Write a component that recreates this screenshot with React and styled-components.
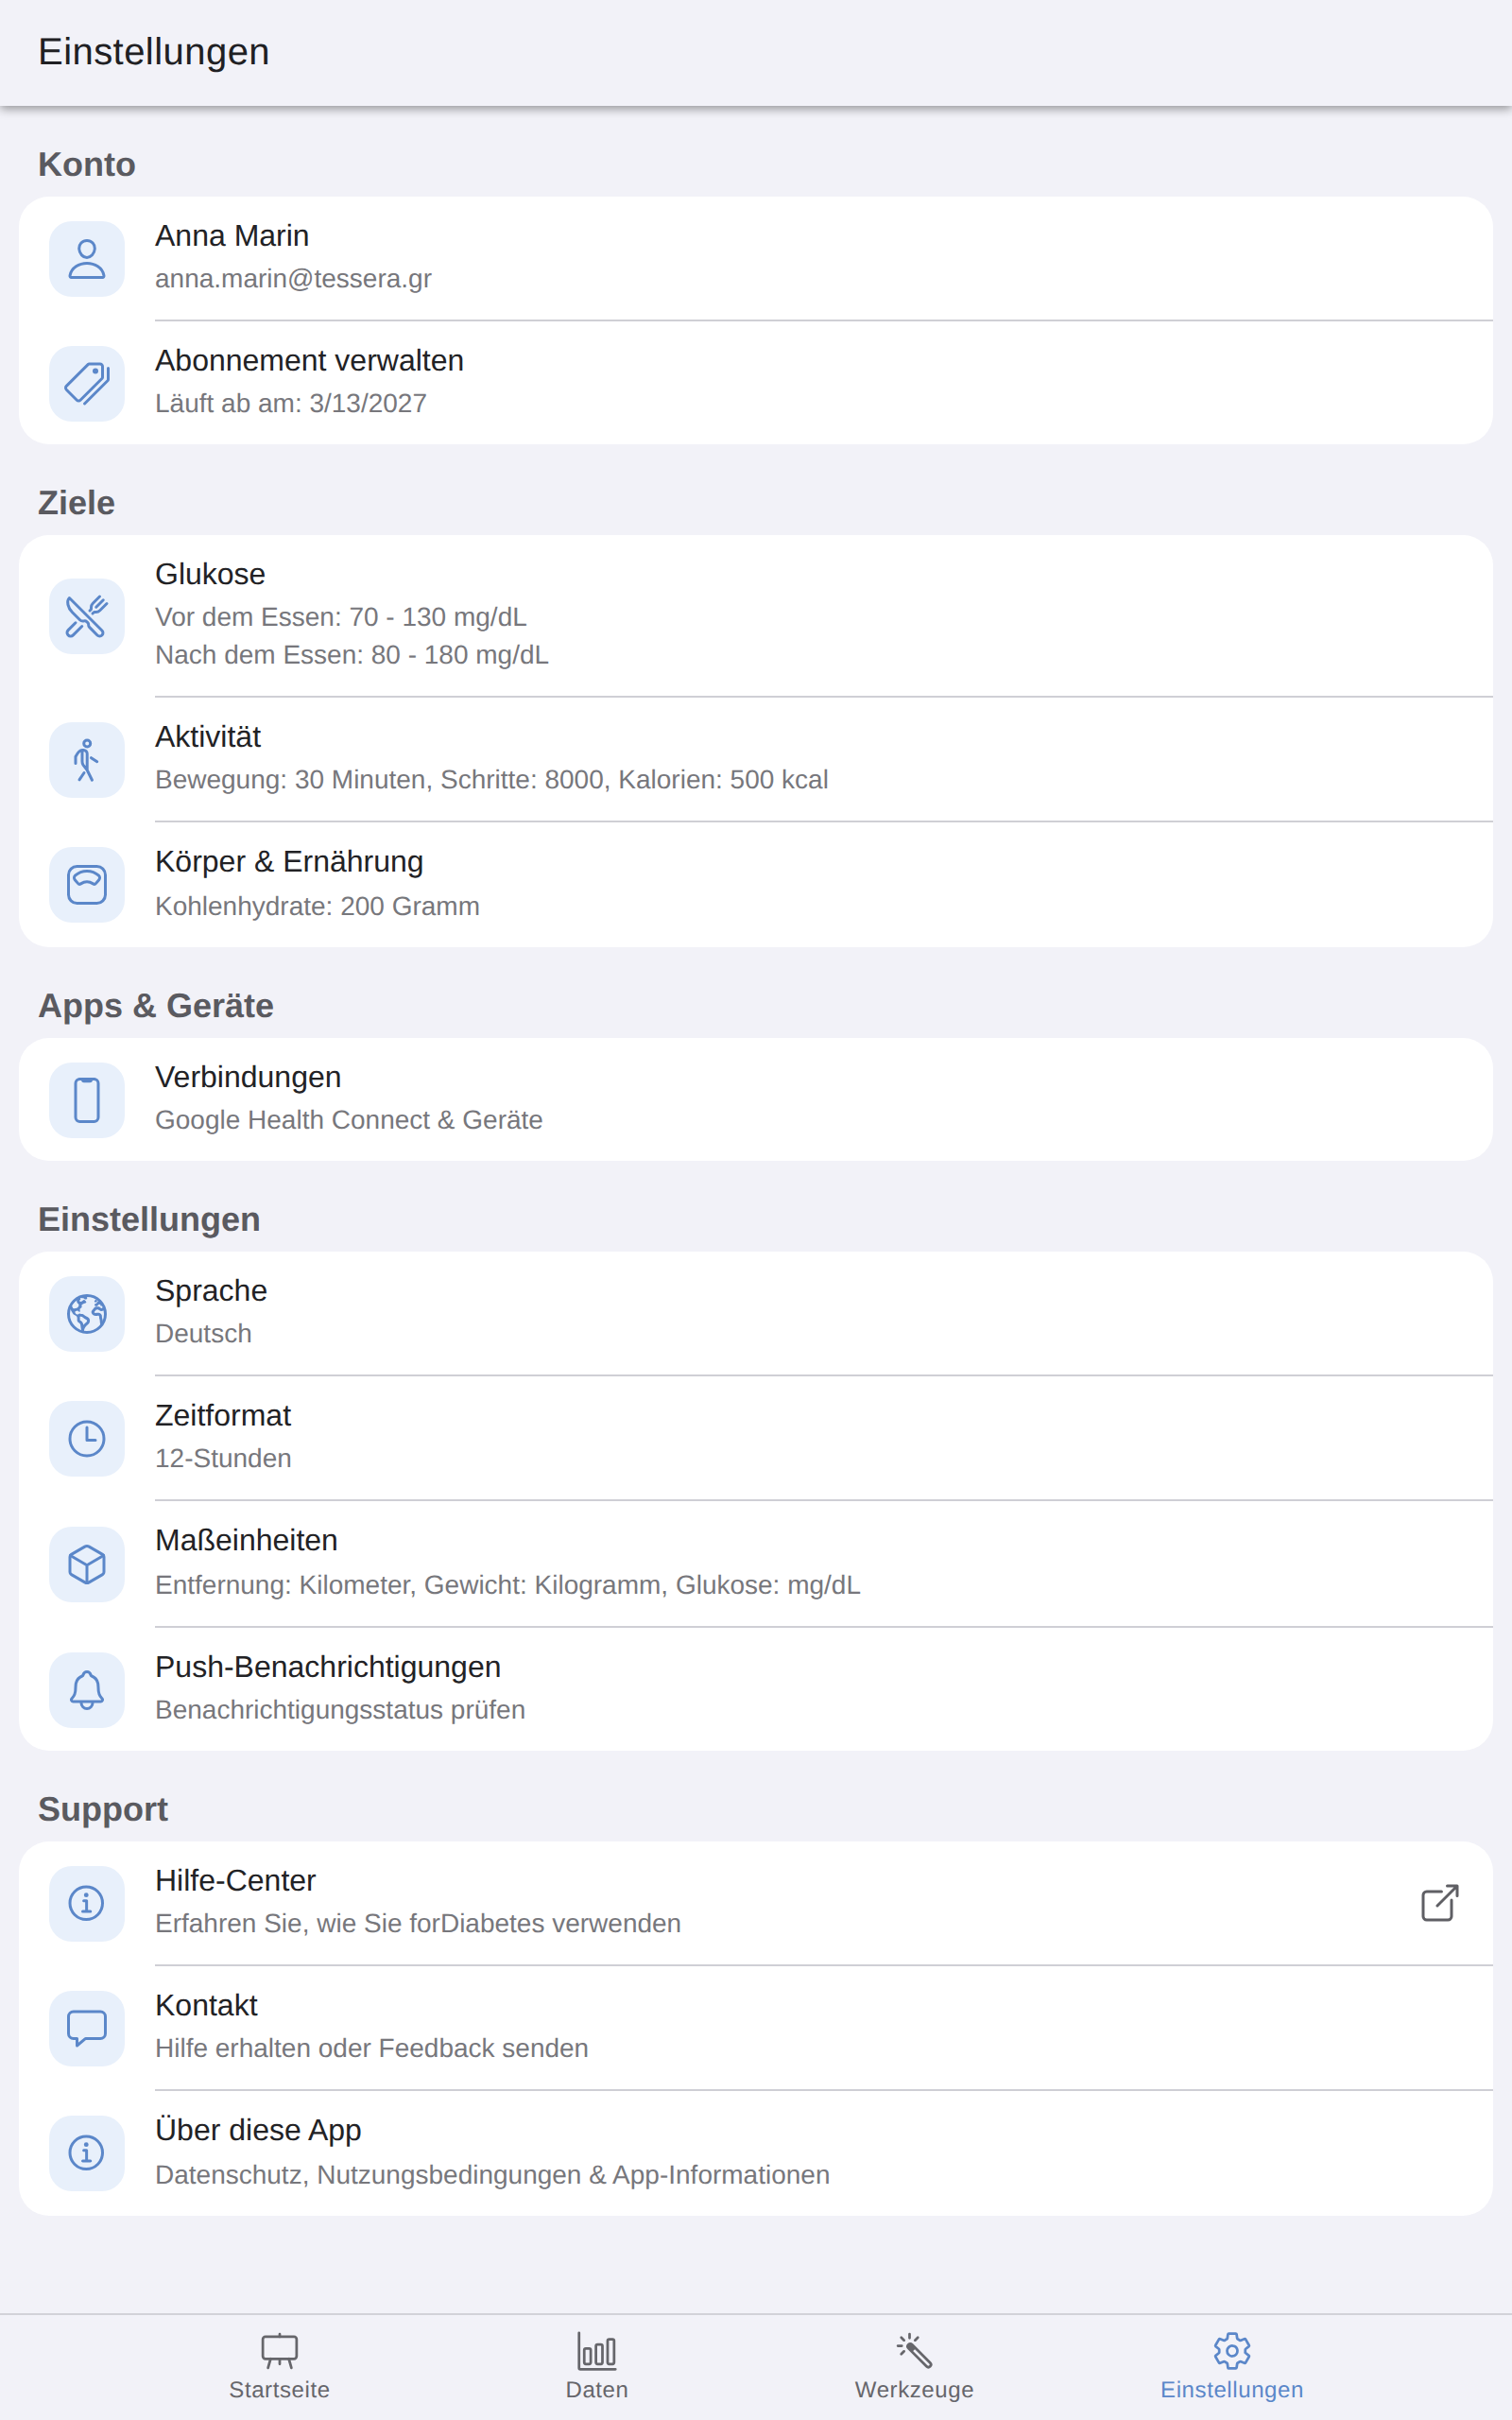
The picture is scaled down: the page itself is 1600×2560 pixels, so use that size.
import React from 'react'
import styled, { createGlobalStyle } from 'styled-components'
import {
  IoPersonOutline,
  IoPricetagsOutline,
  IoRestaurantOutline,
  IoWalkOutline,
  IoScaleOutline,
  IoPhonePortraitOutline,
  IoEarthOutline,
  IoTimeOutline,
  IoCubeOutline,
  IoNotificationsOutline,
  IoInformationCircleOutline,
  IoChatboxOutline,
  IoOpenOutline,
  IoEaselOutline,
  IoBarChartOutline,
  IoColorWandOutline,
  IoSettingsOutline,
} from 'react-icons/io5'

const sections = [
  {
    title: 'Konto',
    items: [
      { icon: IoPersonOutline, title: 'Anna Marin', lines: ['anna.marin@tessera.gr'] },
      { icon: IoPricetagsOutline, title: 'Abonnement verwalten', lines: ['Läuft ab am: 3/13/2027'] },
    ],
  },
  {
    title: 'Ziele',
    items: [
      {
        icon: IoRestaurantOutline,
        title: 'Glukose',
        lines: ['Vor dem Essen: 70 - 130 mg/dL', 'Nach dem Essen: 80 - 180 mg/dL'],
      },
      {
        icon: IoWalkOutline,
        title: 'Aktivität',
        lines: ['Bewegung: 30 Minuten, Schritte: 8000, Kalorien: 500 kcal'],
      },
      { icon: IoScaleOutline, title: 'Körper & Ernährung', tall: true, lines: ['Kohlenhydrate: 200 Gramm'] },
    ],
  },
  {
    title: 'Apps & Geräte',
    items: [
      { icon: IoPhonePortraitOutline, title: 'Verbindungen', lines: ['Google Health Connect & Geräte'] },
    ],
  },
  {
    title: 'Einstellungen',
    items: [
      { icon: IoEarthOutline, title: 'Sprache', lines: ['Deutsch'] },
      { icon: IoTimeOutline, title: 'Zeitformat', lines: ['12-Stunden'] },
      {
        icon: IoCubeOutline,
        title: 'Maßeinheiten',
        tall: true,
        lines: ['Entfernung: Kilometer, Gewicht: Kilogramm, Glukose: mg/dL'],
      },
      { icon: IoNotificationsOutline, title: 'Push-Benachrichtigungen', lines: ['Benachrichtigungsstatus prüfen'] },
    ],
  },
  {
    title: 'Support',
    items: [
      {
        icon: IoInformationCircleOutline,
        title: 'Hilfe-Center',
        external: true,
        lines: ['Erfahren Sie, wie Sie forDiabetes verwenden'],
      },
      { icon: IoChatboxOutline, title: 'Kontakt', lines: ['Hilfe erhalten oder Feedback senden'] },
      {
        icon: IoInformationCircleOutline,
        title: 'Über diese App',
        tall: true,
        lines: ['Datenschutz, Nutzungsbedingungen & App-Informationen'],
      },
    ],
  },
]

const tabs = [
  { icon: IoEaselOutline, label: 'Startseite' },
  { icon: IoBarChartOutline, label: 'Daten' },
  { icon: IoColorWandOutline, label: 'Werkzeuge' },
  { icon: IoSettingsOutline, label: 'Einstellungen', active: true },
]

export default function App() {
  return (
    <Page>
      <GlobalStyle />
      <Header>
        <HeaderTitle>Einstellungen</HeaderTitle>
      </Header>
      <Main>
        {sections.map(section => (
          <section key={section.title}>
            <SectionTitle>{section.title}</SectionTitle>
            <Card>
              {section.items.map((item, i) => {
                const last = i === section.items.length - 1
                return (
                  <Row key={item.title}>
                    <IconSlot $nudge={last && !item.tall}>
                      <IconBox>
                        <item.icon size={48} />
                      </IconBox>
                    </IconSlot>
                    <Body $last={last}>
                      <Texts>
                        <Title $tall={item.tall}>{item.title}</Title>
                        {item.lines.map(line => (
                          <Sub key={line}>{line}</Sub>
                        ))}
                      </Texts>
                      {item.external && (
                        <External>
                          <IoOpenOutline size={48} />
                        </External>
                      )}
                    </Body>
                  </Row>
                )
              })}
            </Card>
          </section>
        ))}
      </Main>
      <TabBar>
        {tabs.map(tab => (
          <Tab key={tab.label} $active={tab.active}>
            <tab.icon size={44} />
            <TabLabel>{tab.label}</TabLabel>
          </Tab>
        ))}
      </TabBar>
    </Page>
  )
}

const GlobalStyle = createGlobalStyle`
  html, body {
    margin: 0;
    padding: 0;
    background: #f2f2f8;
    text-rendering: geometricPrecision;
  }
  * {
    box-sizing: border-box;
  }
`

const Page = styled.div`
  display: flex;
  flex-direction: column;
  height: 2560px;
  overflow: hidden;
  background: #f2f2f8;
  font-family: 'Liberation Sans', Arial, sans-serif;
`

const Header = styled.header`
  position: relative;
  flex: none;
  height: 112px;
  padding: 0 40px 2px;
  display: flex;
  align-items: center;
  background: #f2f2f8;
  box-shadow: 0 3px 10px rgba(0, 0, 0, 0.4);
`

const HeaderTitle = styled.h1`
  margin: 0;
  font-size: 40px;
  font-weight: 400;
  letter-spacing: 0.45px;
  color: #202023;
`

const Main = styled.main`
  flex: 1;
  padding: 0 20px;
`

const SectionTitle = styled.h2`
  margin: 0;
  height: 96px;
  padding: 41px 20px 0;
  font-size: 36px;
  line-height: 42px;
  font-weight: 700;
  color: #5a5a60;
`

const Card = styled.div`
  background: #fff;
  border-radius: 32px;
  overflow: hidden;
`

const Row = styled.div`
  display: flex;
`

const IconSlot = styled.div`
  flex: none;
  width: 144px;
  padding-left: 32px;
  padding-top: ${props => (props.$nudge ? '2px' : '0')};
  display: flex;
  align-items: center;
`

const IconBox = styled.div`
  width: 80px;
  height: 80px;
  border-radius: 24px;
  background: #e8f0fb;
  color: #5b87c9;
  display: flex;
  align-items: center;
  justify-content: center;
`

const Body = styled.div`
  flex: 1;
  min-width: 0;
  display: flex;
  align-items: center;
  padding-right: 32px;
  border-bottom: ${props => (props.$last ? 'none' : '2px solid #cfcfd5')};
`

const Texts = styled.div`
  flex: 1;
  min-width: 0;
  padding: 21px 0 23px;
`

const Title = styled.div`
  font-size: 32px;
  line-height: ${props => (props.$tall ? '41px' : '40px')};
  margin-bottom: ${props => (props.$tall ? '7px' : '6px')};
  color: #222225;
`

const Sub = styled.div`
  font-size: 28px;
  line-height: 40px;
  color: #77777c;
`

const External = styled.div`
  flex: none;
  color: #5f5f64;
  display: flex;
`

const TabBar = styled.nav`
  flex: none;
  height: 113px;
  padding: 16px 128px 0;
  display: grid;
  grid-template-columns: repeat(4, 1fr);
  border-top: 2px solid #d2d2d8;
  background: #f2f2f8;
`

const Tab = styled.div`
  display: flex;
  flex-direction: column;
  align-items: center;
  color: ${props => (props.$active ? '#5b87c9' : '#66666b')};
`

const TabLabel = styled.span`
  margin-top: 4px;
  font-size: 24px;
  line-height: 32px;
  letter-spacing: 0.6px;
`
